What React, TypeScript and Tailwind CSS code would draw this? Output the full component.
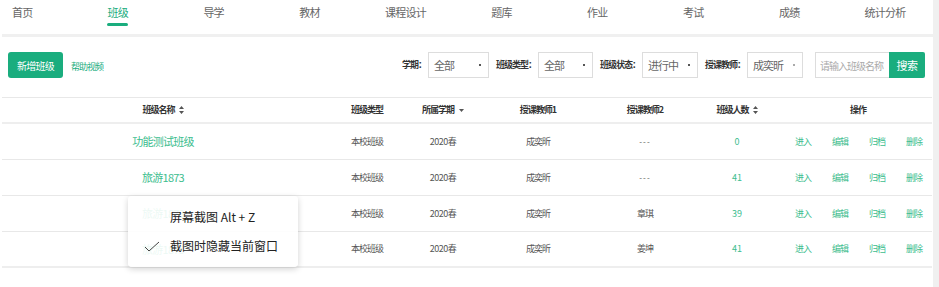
import React from "react";

const tabs = ["首页", "班级", "导学", "教材", "课程设计", "题库", "作业", "考试", "成绩", "统计分析"];

const rows = [
  { name: "功能测试班级", t2: "---", count: "0" },
  { name: "旅游1873", t2: "---", count: "41" },
  { name: "旅游1873", t2: "章琪", count: "39" },
  { name: "旅游1873", t2: "姜坤", count: "41" },
];

const cols = "grid grid-cols-[322px_86px_66px_124px_90px_94px_148px]";

function Sort() {
  return (
    <svg width="5" height="8" viewBox="0 0 5 8" className="ml-[4px] inline-block">
      <path d="M2.5 0 L5 3 H0 Z M2.5 8 L5 5 H0 Z" fill="#555" />
    </svg>
  );
}

function Down() {
  return (
    <svg width="5" height="3" viewBox="0 0 5 3" className="ml-[5px] inline-block">
      <path d="M0 0 H5 L2.5 3 Z" fill="#555" />
    </svg>
  );
}

function Select({ label, value, w, light }: { label: string; value: string; w: string; light?: boolean }) {
  return (
    <div className="flex items-center">
      <span className="text-[9px] tracking-[-1px] font-bold text-[#333] mr-[2px] whitespace-nowrap">{label}：</span>
      <div className={`${w} h-[26px] border border-[#ddd] bg-white flex items-center justify-between pl-[5px] pr-[7px]`}>
        <span className="text-[11px] tracking-[-1px] text-[#666] whitespace-nowrap">{value}</span>
        <span className={`w-[2px] h-[2px] ${light ? "bg-[#aaa]" : "bg-[#555]"}`} />
      </div>
    </div>
  );
}

export default function App() {
  return (
    <div className="w-[939px] h-[287px] bg-[#f0f0f0] overflow-hidden font-['Noto_Sans_CJK_SC',sans-serif]">
      <div className="w-[933px] h-[287px] bg-white relative">
        {/* nav */}
        <div className="flex h-[34px] pt-[4px]">
          {tabs.map((t, i) => (
            <div key={t} className={i === 0 ? "w-[71px] pl-[12px]" : "w-[98px] flex justify-center"}>
              <div className={`text-[11px] tracking-[-0.75px] leading-[16px] ${i === 1 ? "text-[#1aad7e]" : "text-[#666]"}`}>
                {t}
                {i === 1 && <div className="h-[3px] bg-[#1aad7e] mt-[3px] rounded-sm" />}
              </div>
            </div>
          ))}
        </div>
        <div className="h-[3px] ml-[2px] bg-[#f0f0f0]" />

        {/* toolbar */}
        <div className="flex items-start h-[60px] pt-[15px] pl-[8px] pr-[8px]">
          <button className="w-[55px] h-[26px] rounded-[3px] bg-[#1aad7e] text-white text-[10px] tracking-[-0.75px]">新增班级</button>
          <span className="ml-[8px] mt-[8px] text-[9px] tracking-[-1px] text-[#1aad7e]">帮助视频</span>
          <div className="ml-auto flex items-center">
            <div className="flex items-center gap-[7px]">
              <Select label="学期" value="全部" w="w-[61px]" />
              <Select label="班级类型" value="全部" w="w-[55px]" />
              <Select label="班级状态" value="进行中" w="w-[56px]" />
              <Select label="授课教师" value="成奕昕" w="w-[56px]" light />
            </div>
            <div className="flex ml-[12px]">
              <div className="w-[74px] h-[26px] border border-[#ddd] border-r-0 flex items-center pl-[4px] text-[10px] tracking-[-1px] text-[#aaa] whitespace-nowrap overflow-hidden">
                请输入班级名称
              </div>
              <button className="w-[36px] h-[26px] bg-[#1aad7e] text-white text-[11px] tracking-[-0.5px] rounded-r-[2px]">搜索</button>
            </div>
          </div>
        </div>

        {/* table */}
        <div className="ml-[2px] w-[930px]">
          <div className={`${cols} h-[27px] border-t border-[#e8e8e8] border-b-2 border-b-[#eeeeee] items-center text-center text-[9px] tracking-[-1px] font-bold text-[#333]`}>
            <div className="flex items-center justify-center">班级名称<Sort /></div>
            <div>班级类型</div>
            <div className="flex items-center justify-center">所属学期<Down /></div>
            <div>授课教师1</div>
            <div>授课教师2</div>
            <div className="flex items-center justify-center">班级人数<Sort /></div>
            <div>操作</div>
          </div>
          {rows.map((r, i) => (
            <div
              key={i}
              className={`${cols} h-[36px] items-center text-center text-[9px] tracking-[-1px] text-[#555] ${i === rows.length - 1 ? "border-b-2 border-[#eeeeee]" : "border-b border-[#e8e8e8]"}`}
            >
              <div className="text-[11px] tracking-[-0.75px] text-[#3cbd8e]">{r.name}</div>
              <div>本校班级</div>
              <div className="tracking-[-0.5px]">2020春</div>
              <div>成奕昕</div>
              <div className={r.t2 === "---" ? "tracking-[1px] text-[8px]" : ""}>{r.t2}</div>
              <div className="text-[#3cbd8e] tracking-normal">{r.count}</div>
              <div className="flex justify-between pl-[11px] pr-[10px] text-[#3cbd8e]">
                <span>进入</span>
                <span>编辑</span>
                <span>归档</span>
                <span>删除</span>
              </div>
            </div>
          ))}
        </div>

        {/* context menu */}
        <div className="absolute left-[128px] top-[196px] w-[170px] h-[71px] rounded-[4px] bg-white/90 shadow-[0_2px_6px_rgba(0,0,0,0.18)] text-[12px] text-[#222]">
          <div className="absolute left-[42px] top-[13px] leading-[16px]">屏幕截图 Alt + Z</div>
          <svg width="16" height="11" viewBox="0 0 16 11" className="absolute left-[16px] top-[45px]">
            <path d="M1 6 L5 10 L15 1" fill="none" stroke="#444" strokeWidth="1" />
          </svg>
          <div className="absolute left-[42px] top-[42px] leading-[16px]">截图时隐藏当前窗口</div>
        </div>
      </div>
    </div>
  );
}
